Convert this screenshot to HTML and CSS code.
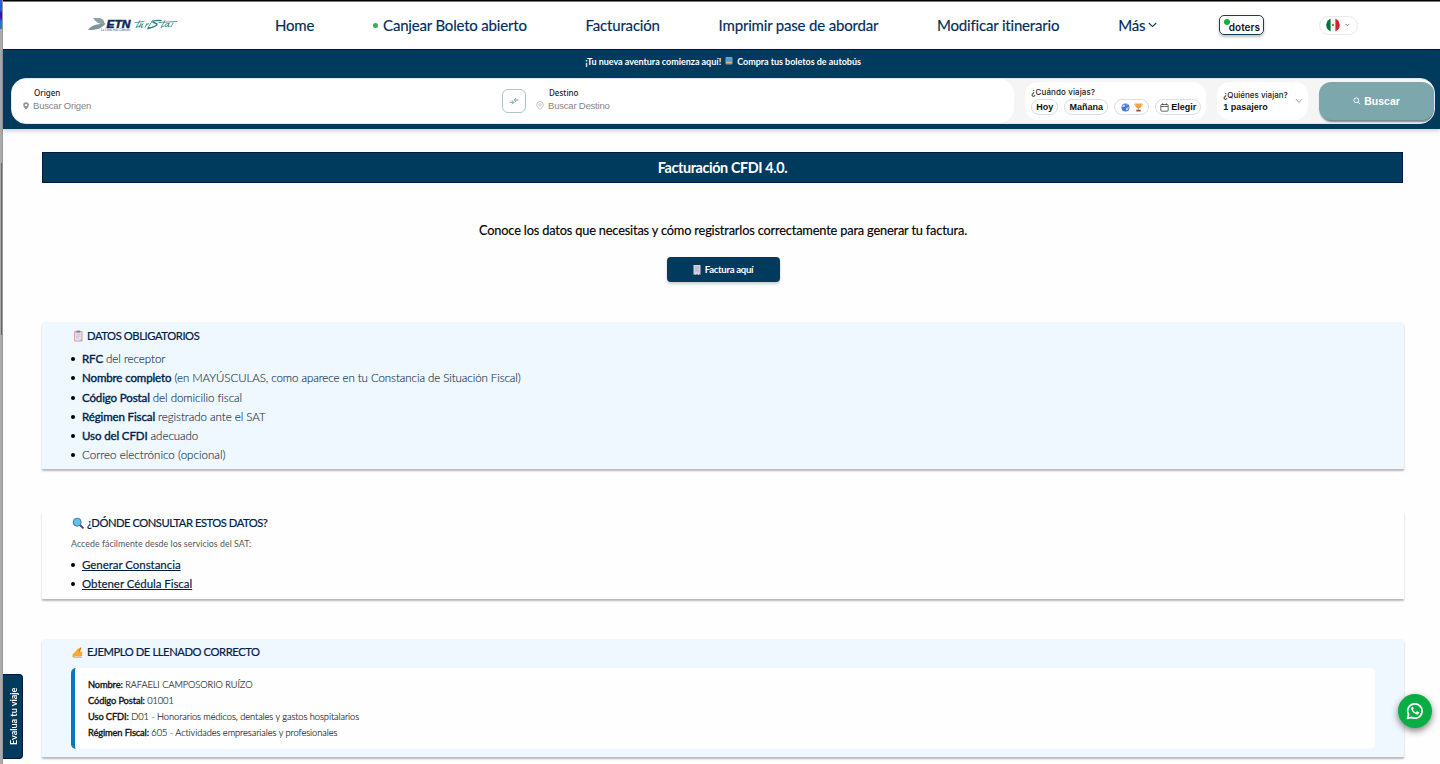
FILE: index.html
```html
<!DOCTYPE html>
<html lang="es">
<head>
    <meta charset="UTF-8">
    <meta name="viewport" content="width=device-width, initial-scale=1.0">
    <title>Facturación CFDI 4.0</title>
    <link rel="stylesheet" href="styles.css">
</head>
<body>
    <div class="edge"><div class="edge-top"></div><div class="edge-thumb"></div></div>
    <div class="page">
        <header class="header">
            <a class="logo" href="#">
                <svg width="92" height="16" viewBox="0 0 92 16">
                    <path d="M5 1h7q4 1 4.500 5l1.500.5-3.500 1Q8 6 5 1z" fill="#8ea3a8"/>
                    <path d="M0 13q3-5 12-6h5.500l-5 4q-4 2-12.500 2z" fill="#7c969b"/>
                    <text x="18.500" y="10.500" class="logo-etn" textLength="24" lengthAdjust="spacingAndGlyphs">ETN</text>
                    <text x="13" y="14" class="logo-slogan" textLength="29" lengthAdjust="spacingAndGlyphs">La Línea más Cómoda</text>
                    <g fill="none" stroke="#2d8283" stroke-width=".8" stroke-linecap="round" stroke-linejoin="round">
                        <path d="M47 5.500l9-1M52 3.500l-4 7 3-1.500M53 6.500l-2 4 4-4-2 4 2-.5M57 10.500l2-4M58 8l3-1.500M65 3l-5 7.500h2"/>
                        <path d="M71 5.500l18-1M77 3.500l-4 7 3-1.500M81 6.500q-4-.5-4 3 2 1 4-3l-1 3.500 2-1M83 10l2-4"/>
                        <path d="M73 3.500q-8-.5-8 1.500l4 2q0 2.500-9 4.500" stroke-width="1.500"/>
                    </g>
                </svg>
            </a>
            <nav class="nav">
                <a href="#">Home</a>
                <a href="#"><i class="dot"></i>Canjear Boleto abierto</a>
                <a href="#">Facturación</a>
                <a href="#">Imprimir pase de abordar</a>
                <a href="#">Modificar itinerario</a>
                <a href="#">Más<svg class="chev" width="9" height="6" viewBox="0 0 9 6"><path d="M.8 1l3.700 3.600L8.200 1" fill="none" stroke="#003a5d" stroke-width="1.1"/></svg></a>
            </nav>
            <a class="doters" href="#"><i></i>doters</a>
            <div class="lang">
                <svg width="14" height="14" viewBox="0 0 14 14">
                    <clipPath id="round"><circle cx="7" cy="7" r="6.8"/></clipPath>
                    <g clip-path="url(#round)">
                        <path d="M0 0h14v14H0z" fill="#f5f5f5"/>
                        <path d="M0 0h4.600v14H0z" fill="#08723f"/>
                        <path d="M9.400 0H14v14H9.400z" fill="#d3202f"/>
                    </g>
                    <circle cx="7" cy="7" r="1.2" fill="#9a7b55"/>
                </svg>
                <svg width="5" height="4" viewBox="0 0 5 4"><path d="M.5.8l2 2 2-2" fill="none" stroke="#6a8b95" stroke-width=".9"/></svg>
            </div>
        </header>

        <section class="banner">
            <p class="promo"><span>¡Tu nueva aventura comienza aquí!</span>
                <svg width="8" height="8" viewBox="0 0 8 8"><rect x=".5" width="7" height="7.5" rx="1" fill="#8f9da3"/><path d="M1 1.500h6V4H1z" fill="#3aa5d8"/><path d="M1 5h6v1H1z" fill="#e0b27a"/></svg>
                <span>Compra tus boletos de autobús</span></p>
            <div class="search">
                <div class="route">
                    <div class="field origin">
                        <label>Origen</label>
                        <div class="place">
                            <svg width="6" height="8" viewBox="0 0 6 8"><path d="M3 .2a2.800 2.800 0 0 0-2.800 2.900C.2 5.200 3 7.700 3 7.700s2.800-2.500 2.800-4.600A2.800 2.800 0 0 0 3 .2zm0 1.700a1.200 1.200 0 1 1 0 2.400 1.200 1.200 0 0 1 0-2.400z" fill="#929292" fill-rule="evenodd"/></svg>
                            <span>Buscar Origen</span>
                        </div>
                    </div>
                    <button class="swap"><svg width="10" height="8" viewBox="0 0 10 8"><path d="M5.500 3h4M7 1L5.200 3 7 5M.5 5.300h4M3 3.300l1.800 2L3 7.300" fill="none" stroke="#6d979e" stroke-width=".9"/></svg></button>
                    <div class="field">
                        <label>Destino</label>
                        <div class="place">
                            <svg width="8" height="9" viewBox="0 0 8 9"><path d="M4 .6a3.300 3.300 0 0 0-3.300 3.300C.7 6 4 8.300 4 8.300S7.300 6 7.300 3.900A3.300 3.300 0 0 0 4 .6z" fill="none" stroke="#a5a5a5" stroke-width=".7"/><circle cx="4" cy="3.900" r="1.200" fill="none" stroke="#aaa" stroke-width=".6"/></svg>
                            <span>Buscar Destino</span>
                        </div>
                    </div>
                </div>
                <div class="when">
                    <label>¿Cuándo viajas?</label>
                    <div class="days">
                        <button class="d1">Hoy</button>
                        <button class="d2">Mañana</button>
                        <button class="d3">
                            <svg width="9" height="9" viewBox="0 0 9 9"><circle cx="4.500" cy="4.500" r="4" fill="#4776d0"/><path d="M2 1.500l2.500.5-1 2L1 4zM5 5l3-1-1 3-2 .5zM5 .8l2 1-1 1z" fill="#b5cff5"/></svg>
                            <svg width="9" height="9" viewBox="0 0 9 9"><path d="M2 .5h5v2.500Q7 5 5 5.500v1.200H4V5.500Q2 5 2 3z" fill="#f2a53a"/><path d="M2 1H.8q0 2.500 1.700 2.700M7 1h1.200q0 2.500-1.700 2.700" fill="none" stroke="#dc9338" stroke-width=".8"/><path d="M2.300 6.700h4.400v1.800H2.300z" fill="#8b5140"/></svg>
                        </button>
                        <button class="d4"><svg width="9" height="9" viewBox="0 0 9 9"><rect x=".8" y="1.500" width="7.400" height="6.700" rx="1" fill="none" stroke="#444" stroke-width=".8"/><path d="M1 3.500h7M2.700.2v2M6.300.2v2" stroke="#444" stroke-width=".8"/></svg>Elegir</button>
                    </div>
                </div>
                <div class="who">
                    <div><label>¿Quiénes viajan?</label><span class="pax">1 pasajero</span></div>
                    <svg width="8" height="6" viewBox="0 0 8 6"><path d="M.8 1L4 4.500 7.200 1" fill="none" stroke="#888" stroke-width=".8"/></svg>
                </div>
                <button class="go"><svg width="8" height="8" viewBox="0 0 8 8"><circle cx="3.300" cy="3.300" r="2.400" fill="none" stroke="#fff" stroke-width=".9"/><path d="M5.200 5.200l2 2" stroke="#fff" stroke-width=".9"/></svg>Buscar</button>
            </div>
        </section>

        <main class="content">
            <h1>Facturación CFDI 4.0.</h1>
            <p class="intro">Conoce los datos que necesitas y cómo registrarlos correctamente para generar tu factura.</p>
            <a class="invoice" href="#"><svg width="8" height="10" viewBox="0 0 8 10"><path d="M.5 0h7v10l-1-.7-1 .7-1.500-.7L2.500 10l-1-.7-1 .7z" fill="#d6cee0"/><path d="M2 2h4M2 4h4M2 6h4" stroke="#a9a3bc" stroke-width=".8"/></svg><span>Factura aquí</span></a>

            <section class="card blue required">
                <h2><svg width="12" height="12" viewBox="0 0 12 12"><rect x="2" y="1" width="8.500" height="10.500" rx=".8" fill="#d9a490"/><path d="M3 2.300h6.500v6L8 10.500H3z" fill="#e3e2f2"/><path d="M4.500.6h3.600v2H4.500z" fill="#7d8291"/><path d="M4 4.500h4.500M4 6.200h4.500M4 8h3" stroke="#b8b4ca" stroke-width=".6"/></svg><span>DATOS OBLIGATORIOS</span></h2>
                <ul>
                    <li><strong>RFC</strong> del receptor</li>
                    <li><strong>Nombre completo</strong> (en MAYÚSCULAS, como aparece en tu Constancia de Situación Fiscal)</li>
                    <li><strong>Código Postal</strong> del domicilio fiscal</li>
                    <li><strong>Régimen Fiscal</strong> registrado ante el SAT</li>
                    <li><strong>Uso del CFDI</strong> adecuado</li>
                    <li>Correo electrónico (opcional)</li>
                </ul>
            </section>

            <section class="card where">
                <h2><svg width="12" height="12" viewBox="0 0 12 12"><path d="M7.800 7.800l3 3" stroke="#65448c" stroke-width="2" stroke-linecap="round"/><circle cx="5.200" cy="5.200" r="4" fill="#5cc4ee" stroke="#3f6f94" stroke-width=".9"/></svg><span>¿DÓNDE CONSULTAR ESTOS DATOS?</span></h2>
                <p>Accede fácilmente desde los servicios del SAT:</p>
                <ul>
                    <li><a href="#">Generar Constancia</a></li>
                    <li><a href="#">Obtener Cédula Fiscal</a></li>
                </ul>
            </section>

            <section class="card blue example">
                <h2><svg width="12" height="12" viewBox="0 0 12 12"><path d="M4 8L8 1.500l1.500.3L7 8z" fill="#e8692f"/><path d="M.5 8.500L3 6l3-3.500q1.500-.5 1.300 1L6.500 5.500l3.500.3q1 .7-.2 1.400 1.300.8.200 1.500.8 1-.5 1.300-2.500 1-5 .3L.5 11z" fill="#fba92d"/><path d="M1 11.300h9" stroke="#8c6a8f" stroke-width=".5"/></svg><span>EJEMPLO DE LLENADO CORRECTO</span></h2>
                <div class="sample">
                    <p><strong>Nombre:</strong> RAFAELI CAMPOSORIO RUÍZO</p>
                    <p><strong>Código Postal:</strong> 01001</p>
                    <p><strong>Uso CFDI:</strong> D01 - Honorarios médicos, dentales y gastos hospitalarios</p>
                    <p><strong>Régimen Fiscal:</strong> 605 - Actividades empresariales y profesionales</p>
                </div>
            </section>
        </main>
    </div>

    <a class="rate" href="#">Evalua tu viaje</a>
    <a class="whatsapp" href="#">
        <svg width="18" height="18" viewBox="0 0 18 18"><path d="M1.500 16.500l1.100-4A7.200 7.200 0 1 1 5.600 15.400z" fill="none" stroke="#fff" stroke-width="1.700" stroke-linejoin="round"/><path d="M6.300 4.800c-.5.200-1.200.9-1.100 2 .3 2.300 3 5.100 5.500 5.600 1.100.2 2.200-.5 2.400-1.500.1-.5 0-.6-.4-.8l-1.400-.7c-.3-.1-.5 0-.7.2l-.6.800c-1.300-.5-2.300-1.400-2.900-2.700l.5-.7c.2-.2.200-.4.100-.6l-.6-1.400c-.1-.3-.4-.3-.8-.2z" fill="#fff"/></svg>
    </a>
</body>
</html>
```
FILE: styles.css
```css
* {
    box-sizing: border-box;
}
body {
    margin: 0;
    height: 764px;
    overflow: hidden;
    display: flex;
    font-family: Lato, sans-serif;
    background-color: #fefefe;
    color: #000;
}
a {
    color: inherit;
    text-decoration: none;
}
h1, h2, p, ul {
    margin: 0;
    padding: 0;
}
button {
    font-family: inherit;
    padding: 0;
    color: #111;
    background: #fff;
}
svg {
    flex: none;
}

/* window edge */
.edge {
    width: 3px;
    flex: none;
    background-color: #ababab;
    border-right: 1px solid #999;
}
.edge-top {
    height: 29px;
    background: linear-gradient(#2461d5 35%, #3b10b5 45%, #3b10b5 60%, #2677d0 75%);
}
.edge-thumb {
    height: 172px;
    margin: 134px 0 0 1px;
    background-color: #666;
}
.page {
    flex: 1;
    min-width: 0;
}

/* header */
.header {
    height: 49px;
    border-top: 1px solid #000;
    box-shadow: inset 0 1px 0 #777;
    display: flex;
    align-items: center;
    color: #002c5c;
    background-color: #fff;
}
.logo {
    width: 92px;
    height: 16px;
    margin: -1px 95px 0 85px;
}
.logo svg {
    display: block;
}
.logo-etn {
    font: italic bold 10.5px "Liberation Sans", Arial, sans-serif;
    fill: #10275c;
    stroke: #10275c;
    stroke-width: .5px;
}
.logo-slogan {
    font: italic 3.5px "Liberation Sans", Arial, sans-serif;
    fill: #344c70;
}
.nav {
    display: flex;
    gap: 58.8px;
    font-size: 15px;
    letter-spacing: -.18px;
    white-space: nowrap;
    -webkit-text-stroke: .15px;
}
.nav a {
    display: flex;
    align-items: center;
}
.dot {
    width: 5px;
    height: 5px;
    margin-right: 5px;
    border-radius: 50%;
    background-color: #36aa56;
}
.chev {
    margin: -1px 0 0 3px;
}
.doters {
    position: relative;
    width: 45px;
    height: 20px;
    margin-left: auto;
    border: 1px solid #123f5f;
    border-radius: 5px;
    box-shadow: 0 2px 3px rgba(0, 0, 0, 0.25);
    font: 600 10px/22px Inter, sans-serif;
    color: #161616;
    text-align: right;
    padding-right: 3px;
}
.doters i {
    position: absolute;
    left: 4px;
    top: 3px;
    width: 6px;
    height: 6px;
    border-radius: 50%;
    background-color: #14ae43;
}
.lang {
    width: 39px;
    height: 19px;
    margin: 0 82px 0 55px;
    padding: 0 7px 0 6px;
    display: flex;
    align-items: center;
    justify-content: space-between;
    border: 1px solid #e9e9e9;
    border-radius: 10px;
}

/* banner and search bar */
.banner {
    height: 80px;
    padding: 4px 5px 0 8px;
    background-color: #003a5d;
    border-top: 1px solid #071440;
    box-shadow: 0 2px 4px rgba(0, 40, 90, 0.22);
}
.promo {
    height: 14px;
    display: flex;
    align-items: center;
    justify-content: center;
    gap: 4px;
    color: #fff;
    font-size: 9px;
    font-weight: bold;
    letter-spacing: -.03px;
}
.search {
    height: 46px;
    margin-top: 10px;
    padding: 3px 0;
    display: flex;
    background-color: #f5f5f5;
    border: 1px solid #dfe7f2;
    border-radius: 15px;
    overflow: hidden;
}
.search label {
    display: block;
    font: 500 8px/10px Inter, sans-serif;
    color: #222;
}
.route {
    width: 1004px;
    margin: -3px 11px -3px -1px;
    display: flex;
    background-color: #fff;
    border-radius: 0 15px 15px 0;
}
.field {
    padding-top: 9px;
}
.origin {
    width: 491px;
    padding-left: 12px;
}
.origin label {
    padding-left: 11px;
}
.route .field label {
    font-family: "Noto Sans", sans-serif;
}
.place {
    display: flex;
    align-items: center;
    gap: 4px;
    height: 15px;
    font: 9.5px "Liberation Sans", Arial, sans-serif;
    letter-spacing: -.2px;
    color: #858585;
}
.swap {
    width: 24px;
    height: 24px;
    margin: 10px 10px 0 0;
    border: 1px solid #abc4c8;
    border-radius: 6px;
    display: flex;
    align-items: center;
    justify-content: center;
}
.swap + .field label {
    padding-left: 13px;
}
.when {
    width: 181px;
    margin-right: 11px;
    padding: 5px 0 0 6px;
    background-color: #fff;
    border-radius: 13px;
}
.when label {
    letter-spacing: .1px;
}
.days {
    display: flex;
    margin-top: 2px;
}
.days button {
    height: 16px;
    border: 1px solid #ddd;
    border-radius: 8px;
    font: bold 9px "Liberation Sans", Arial, sans-serif;
    display: flex;
    align-items: center;
    justify-content: center;
    gap: 2px;
}
.days .d1 {
    width: 27px;
    margin-right: 6px;
}
.days .d2 {
    width: 44px;
    margin-right: 6px;
}
.days .d3 {
    width: 35px;
    margin-right: 6px;
    gap: 4px;
}
.days .d4 {
    width: 46px;
}
.who {
    width: 91px;
    margin-right: 11px;
    padding: 0 5px 0 6px;
    display: flex;
    align-items: center;
    justify-content: space-between;
    background-color: #fff;
    border-radius: 13px;
}
.pax {
    display: block;
    margin-top: 2px;
    font: bold 9px/11px "Liberation Sans", Arial, sans-serif;
    color: #111;
}
.go {
    width: 115px;
    height: 38px;
    border: 0;
    border-radius: 12px;
    background-color: #7ba7ad;
    box-shadow: 1px 2px 2px #6d8589;
    color: #fff;
    font: bold 10.5px "Liberation Sans", Arial, sans-serif;
    display: flex;
    align-items: center;
    justify-content: center;
    gap: 3px;
    padding-bottom: 1px;
}

/* content */
.content {
    padding: 23px 36px 0 39px;
}
h1 {
    height: 31px;
    margin-right: 1px;
    border: 1px solid #051849;
    background-color: #003a5d;
    color: #fff;
    font-size: 14.4px;
    line-height: 30px;
    text-align: center;
    letter-spacing: -.4px;
}
.intro {
    margin-top: 39px;
    text-align: center;
    font-size: 12.8px;
    line-height: 17px;
    letter-spacing: -.18px;
    -webkit-text-stroke: .15px;
}
.invoice {
    width: 113px;
    height: 25px;
    margin: 18px auto 0;
    display: flex;
    align-items: center;
    justify-content: center;
    gap: 4px;
    border-radius: 4px;
    background-color: #003a5d;
    box-shadow: 0 2px 3px rgba(0, 0, 0, 0.2);
    color: #fff;
    font-size: 9.6px;
    font-weight: bold;
    letter-spacing: -.3px;
}
.card {
    padding: 5px 29px 0 29px;
    border-radius: 3px 3px 1px 1px;
    background-color: #fefefe;
    box-shadow: 0 2px 2px rgba(0, 0, 0, 0.28);
}
.blue {
    background-color: #eff7ff;
}
.required {
    height: 147px;
    margin-top: 40px;
}
.where {
    height: 88px;
    margin-top: 42px;
    padding-top: 3px;
}
.example {
    height: 118px;
    margin-top: 40px;
    padding-top: 4px;
}
.card h2 {
    display: flex;
    align-items: center;
    gap: 3px;
    padding-left: 1px;
    height: 17px;
    font-size: 11.2px;
    font-weight: normal;
    letter-spacing: -.4px;
    color: #002048;
    -webkit-text-stroke: .2px;
}
.where h2 {
    letter-spacing: -.46px;
}
.card ul {
    padding-left: 11px;
    list-style: none;
    font-size: 11.5px;
    line-height: 19.25px;
}
.card li {
    font-weight: 300;
    letter-spacing: -.04px;
    color: #1c3a50;
    -webkit-text-stroke: .15px;
}
.card li::before {
    content: "";
    float: left;
    width: 4px;
    height: 4px;
    margin: 8px 0 0 -11px;
    border-radius: 50%;
    background-color: #000;
}
.required ul {
    margin-top: 5px;
}
.required li:nth-child(2) {
    letter-spacing: -.07px;
}
.required li:last-child {
    letter-spacing: .04px;
}
.card strong {
    font-weight: normal;
    letter-spacing: -.12px;
    color: #002048;
    -webkit-text-stroke: .35px;
}
.where p {
    margin-top: 7px;
    font-size: 8.8px;
    line-height: 12px;
    letter-spacing: .05px;
    color: #555;
}
.where ul {
    margin-top: 5px;
}
.where li a {
    font-weight: normal;
    color: #002048;
    text-decoration: underline;
}
.sample {
    height: 81px;
    margin-top: 8px;
    padding: 8.5px 0 0 13px;
    border-left: 4px solid #0878b8;
    border-radius: 5px;
    background-color: #fefefe;
    font-size: 9.3px;
    font-weight: 300;
    line-height: 16px;
    letter-spacing: -.07px;
    color: #222;
    -webkit-text-stroke: .15px;
}
.sample strong {
    color: #111;
}

/* floating items */
.rate {
    position: fixed;
    left: 3px;
    top: 674px;
    width: 20px;
    height: 85px;
    border: 1px solid #051849;
    border-right: 0;
    border-radius: 4px 0 0 4px;
    background-color: #003a5d;
    color: #fff;
    font-size: 9px;
    font-weight: bold;
    line-height: 21px;
    text-align: center;
    writing-mode: vertical-rl;
    transform: rotate(180deg);
}
.whatsapp {
    position: fixed;
    left: 1398px;
    top: 694px;
    width: 34px;
    height: 34px;
    display: flex;
    align-items: center;
    justify-content: center;
    border-radius: 50%;
    background-color: #08ae43;
    box-shadow: 0 3px 7px rgba(0, 0, 0, 0.5);
}
```
